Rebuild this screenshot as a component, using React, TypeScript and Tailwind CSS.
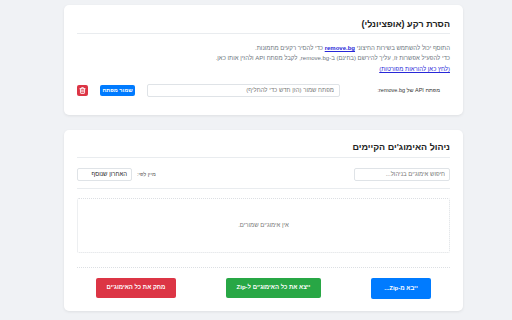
import { Trash2 } from "lucide-react"

const font = { fontFamily: '"Liberation Sans", Arial, "DejaVu Sans", sans-serif' }

function BackgroundRemoval() {
  return (
    <section className="bg-white rounded-[5px] shadow-[0_1px_3px_rgba(0,0,0,0.08)] px-[13px] pt-[13px] pb-[18px]">
      <h2 className="text-[9px] leading-[12px] font-bold text-[#222] pb-[3px] border-b border-[#e9ecef]">
        הסרת רקע (אופציונלי)
      </h2>

      <div className="mt-[10px] text-[6px] leading-[9.5px] text-[#6c757d]">
        <p>
          התוסף יכול להשתמש בשירות החיצוני{" "}
          <a className="font-bold text-[#2828d8] underline">remove.bg</a> כדי להסיר רקעים מתמונות.
        </p>
        <p>כדי להפעיל אפשרות זו, עליך להירשם (בחינם) ב-remove.bg, לקבל מפתח API ולהזין אותו כאן.</p>
        <a className="block mt-[2px] text-[#2828d8] underline">(לחץ כאן להוראות מפורטות)</a>
      </div>

      <div className="mt-[9px] flex items-center">
        <label className="w-[110px] whitespace-nowrap pr-[10px] text-[5.5px] text-[#333]">
          מפתח API של remove.bg:
        </label>
        <input
          className="ml-[12px] w-[193px] h-[13px] border border-[#dfe3e7] rounded-[2px] px-[5px] text-[6px] placeholder:text-[#777] outline-none"
          placeholder="מפתח שמור (הזן חדש כדי להחליף)"
        />
        <button className="w-[35px] h-[11px] rounded-[2px] bg-[#007bff] text-white text-[5.5px] font-bold">
          שמור מפתח
        </button>
        <button className="mr-[12px] w-[11px] h-[11px] rounded-[2px] bg-[#dc3545] flex items-center justify-center">
          <Trash2 className="w-[7px] h-[7px] text-white" strokeWidth={3} />
        </button>
      </div>
    </section>
  )
}

function EmojiManager() {
  return (
    <section className="mt-[15px] bg-white rounded-[5px] shadow-[0_1px_3px_rgba(0,0,0,0.08)] px-[13px] pt-[11px] pb-[12px]">
      <h2 className="text-[9px] leading-[12px] font-bold text-[#222] pb-[4px] border-b border-[#e9ecef]">
        ניהול האימוג'ים הקיימים
      </h2>

      <div className="flex items-center justify-between pt-[10px] pb-[7px] border-b border-[#e9ecef]">
        <input
          className="w-[96px] h-[13px] border border-[#dfe3e7] rounded-[2px] px-[4px] text-[6px] placeholder:text-[#777] outline-none"
          placeholder="חיפוש אימוג'ים בניהול..."
        />
        <div className="flex items-center gap-[5px]">
          <span className="text-[5.5px] text-[#555]">מיין לפי:</span>
          <div className="w-[55px] h-[13px] border border-[#dfe3e7] rounded-[2px] px-[4px] flex items-center text-[6px] text-[#222]">
            האחרון שנוסף
          </div>
        </div>
      </div>

      <div className="mt-[9px] h-[55px] border border-dotted border-[#dcdfe3] rounded-[2px] flex items-center justify-center text-[6px] text-[#777]">
        אין אימוג'ים שמורים.
      </div>

      <div className="mt-[14px] pt-[10px] border-t border-dotted border-[#dcdfe3] flex justify-center gap-[50px]">
        <button className="w-[60px] h-[21px] rounded-[2px] bg-[#007bff] text-white text-[6px] font-bold">
          ייבא מ-Zip...
        </button>
        <button className="w-[95px] h-[20px] rounded-[2px] bg-[#28a745] text-white text-[6px] font-bold">
          ייצא את כל האימוג'ים ל-Zip
        </button>
        <button className="w-[80px] h-[20px] rounded-[2px] bg-[#dc3545] text-white text-[6px] font-bold">
          מחק את כל האימוג'ים
        </button>
      </div>
    </section>
  )
}

export default function App() {
  return (
    <div dir="rtl" style={font} className="w-[512px] h-[320px] bg-[#f0f2f5] overflow-hidden">
      <div className="mr-[49px] w-[399px] pt-[5px]">
        <BackgroundRemoval />
        <EmojiManager />
      </div>
    </div>
  )
}
